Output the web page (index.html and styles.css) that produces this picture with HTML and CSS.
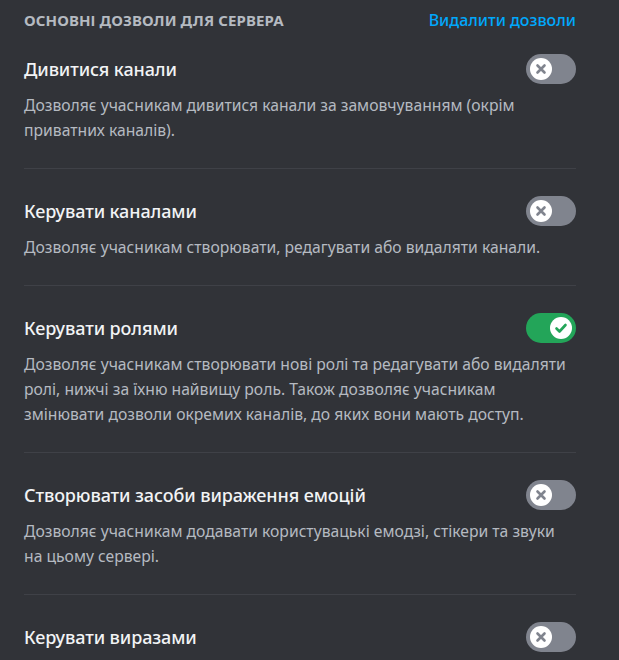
FILE: index.html
```html
<!DOCTYPE html>
<html lang="uk">
  <head>
    <meta charset="UTF-8" />
    <meta name="viewport" content="width=device-width, initial-scale=1.0" />
    <title>Дозволи ролі</title>
    <link rel="stylesheet" href="styles.css">
  </head>
  <body>
    <div class="permissions">
      <div class="section-head">
        <h2>Основні дозволи для сервера</h2>
        <a class="clear-link" href="#">Видалити дозволи</a>
      </div>

      <div class="perm">
        <div class="perm-top">
          <div class="perm-title">Дивитися канали</div>
          <div class="switch">
            <span class="knob">
              <svg viewBox="0 0 20 20"><path d="M6.5 6.5l7 7M13.5 6.5l-7 7" /></svg>
            </span>
          </div>
        </div>
        <div class="perm-desc">Дозволяє учасникам дивитися канали за замовчуванням (окрім<br />приватних каналів).</div>
      </div>

      <div class="perm">
        <div class="perm-top">
          <div class="perm-title">Керувати каналами</div>
          <div class="switch">
            <span class="knob">
              <svg viewBox="0 0 20 20"><path d="M6.5 6.5l7 7M13.5 6.5l-7 7" /></svg>
            </span>
          </div>
        </div>
        <div class="perm-desc">Дозволяє учасникам створювати, редагувати або видаляти канали.</div>
      </div>

      <div class="perm">
        <div class="perm-top">
          <div class="perm-title">Керувати ролями</div>
          <div class="switch switch-on">
            <span class="knob">
              <svg viewBox="0 0 20 20"><path d="M5.5 10.5l3 3 6-6.5" /></svg>
            </span>
          </div>
        </div>
        <div class="perm-desc">Дозволяє учасникам створювати нові ролі та редагувати або видаляти<br />ролі, нижчі за їхню найвищу роль. Також дозволяє учасникам<br />змінювати дозволи окремих каналів, до яких вони мають доступ.</div>
      </div>

      <div class="perm">
        <div class="perm-top">
          <div class="perm-title">Створювати засоби вираження емоцій</div>
          <div class="switch">
            <span class="knob">
              <svg viewBox="0 0 20 20"><path d="M6.5 6.5l7 7M13.5 6.5l-7 7" /></svg>
            </span>
          </div>
        </div>
        <div class="perm-desc">Дозволяє учасникам додавати користувацькі емодзі, стікери та звуки<br />на цьому сервері.</div>
      </div>

      <div class="perm">
        <div class="perm-top">
          <div class="perm-title">Керувати виразами</div>
          <div class="switch">
            <span class="knob">
              <svg viewBox="0 0 20 20"><path d="M6.5 6.5l7 7M13.5 6.5l-7 7" /></svg>
            </span>
          </div>
        </div>
      </div>
    </div>
  </body>
</html>
```

FILE: styles.css
```css
body {
  margin: 0;
  background-color: #313338;
  font-family: "Noto Sans", "Open Sans", sans-serif;
  overflow: hidden;
}
.permissions {
  width: 552px;
  padding: 10px 0 0 24px;
}
.section-head {
  display: flex;
  justify-content: space-between;
  align-items: center;
  height: 20px;
  margin-bottom: 24px;
}
.section-head h2 {
  margin: 0;
  font-size: 15px;
  font-weight: 700;
  text-transform: uppercase;
  color: #b5bac1;
  letter-spacing: 0.1px;
}
.clear-link {
  color: #00a8fc;
  font-size: 16px;
  font-weight: 500;
  text-decoration: none;
}
.perm {
  padding-bottom: 25px;
}
.perm + .perm {
  border-top: 1px solid #3f4147;
  padding-top: 27px;
}
.perm-top {
  display: flex;
  justify-content: space-between;
  align-items: center;
  height: 30px;
}
.perm-title {
  font-size: 18px;
  font-weight: 500;
  color: #f2f3f5;
  letter-spacing: -0.1px;
}
.perm-desc {
  margin-top: 9px;
  font-size: 15.7px;
  line-height: 25px;
  color: #b5bac1;
  white-space: nowrap;
}
.switch {
  width: 50px;
  height: 30px;
  border-radius: 15px;
  background-color: #80848e;
  display: flex;
  align-items: center;
  padding: 0 4px;
  box-sizing: border-box;
}
.switch-on {
  background-color: #23a559;
  justify-content: flex-end;
}
.knob {
  width: 22px;
  height: 22px;
  border-radius: 50%;
  background-color: #fff;
  display: flex;
  align-items: center;
  justify-content: center;
}
.knob svg {
  width: 20px;
  height: 20px;
  fill: none;
  stroke: #80848e;
  stroke-width: 2.6;
  stroke-linecap: round;
  stroke-linejoin: round;
}
.switch-on .knob svg {
  stroke: #23a559;
}
```
